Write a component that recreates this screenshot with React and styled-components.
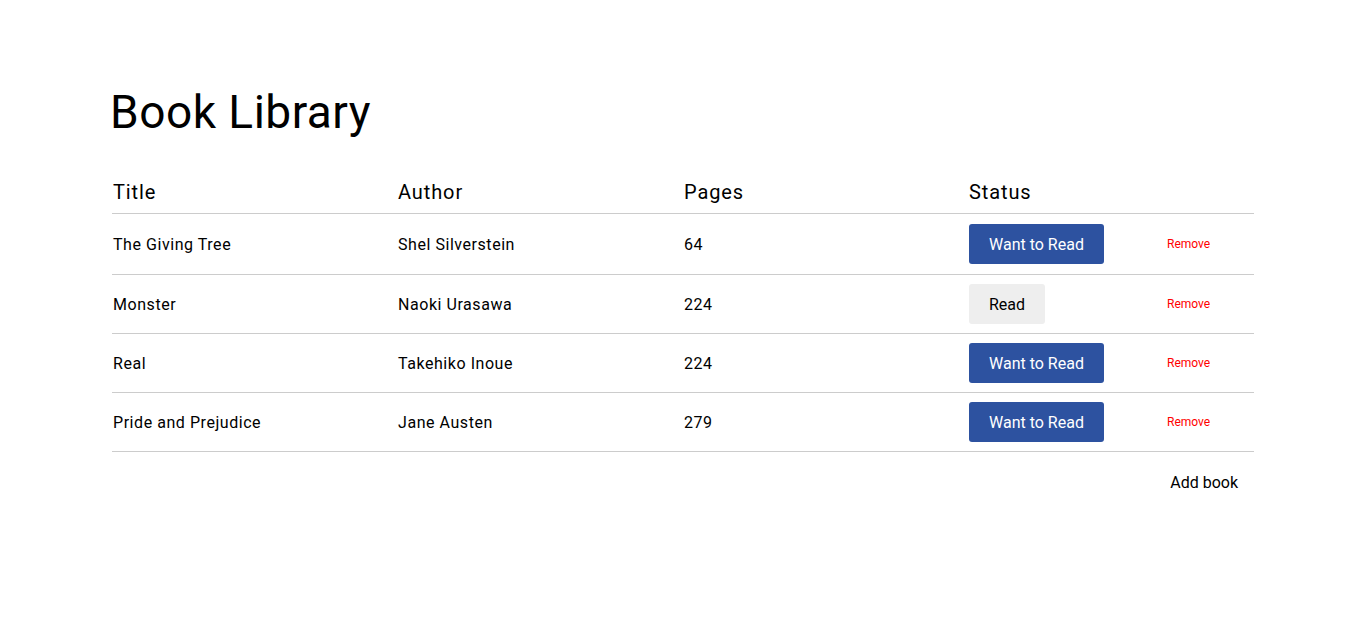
import styled, { createGlobalStyle } from "styled-components"

const GlobalStyle = createGlobalStyle`
    body {
        margin : 0;
        background : #fff;
        font-family : Roboto, "Liberation Sans", sans-serif;
        color : #000;
    }
`
const Page = styled.div`
    width : 1142px;
    padding : 85px 0 0 112px;
`
const Heading = styled.h1`
    font-size : 46px;
    font-weight : 400;
    margin : 0 0 32px -2px;
    letter-spacing : 0.5px;
`
const Row = styled.div`
    display : grid;
    grid-template-columns : 285px 286px 285px 198px 88px;
    align-items : center;
    height : ${props => props.$height || 59}px;
    border-bottom : 1px solid #ccc;
`
const HeadCell = styled.div`
    font-size : 20px;
    font-weight : 400;
    letter-spacing : 0.9px;
    padding-left : 1px;
`
const Cell = styled.div`
    font-size : 16px;
    letter-spacing : 0.55px;
    padding-left : 1px;
`
const StatusButton = styled.button`
    font-family : inherit;
    font-size : 16px;
    height : 40px;
    padding : 0 20px;
    border : none;
    border-radius : 3px;
    margin-left : 1px;
    background : ${props => props.$read ? "#eeeeee" : "#2d52a0"};
    color : ${props => props.$read ? "#000" : "#fff"};
    cursor : pointer;
`
const RemoveButton = styled.button`
    font-family : inherit;
    font-size : 12px;
    color : #ff0000;
    background : none;
    border : none;
    padding : 0 0 0 1px;
    justify-self : start;
    cursor : pointer;
`
const Footer = styled.div`
    display : flex;
    justify-content : flex-end;
    padding-top : 21px;
`
const AddButton = styled.button`
    font-family : inherit;
    font-size : 16px;
    background : none;
    border : none;
    padding : 0 16px;
    cursor : pointer;
`

const books = [
    { title : "The Giving Tree", author : "Shel Silverstein", pages : 64, read : false },
    { title : "Monster", author : "Naoki Urasawa", pages : 224, read : true },
    { title : "Real", author : "Takehiko Inoue", pages : 224, read : false },
    { title : "Pride and Prejudice", author : "Jane Austen", pages : 279, read : false },
]

const App = () => {
    return (
        <Page>
            <GlobalStyle />
            <Heading>Book Library</Heading>
            <Row $height={42}>
                <HeadCell>Title</HeadCell>
                <HeadCell>Author</HeadCell>
                <HeadCell>Pages</HeadCell>
                <HeadCell>Status</HeadCell>
                <div></div>
            </Row>
            {books.map((book, i) => (
                <Row key={book.title} $height={i === 0 ? 60 : 58}>
                    <Cell>{book.title}</Cell>
                    <Cell>{book.author}</Cell>
                    <Cell>{book.pages}</Cell>
                    <div>
                        <StatusButton $read={book.read}>
                            {book.read ? "Read" : "Want to Read"}
                        </StatusButton>
                    </div>
                    <RemoveButton>Remove</RemoveButton>
                </Row>
            ))}
            <Footer>
                <AddButton>Add book</AddButton>
            </Footer>
        </Page>
    )
}

export default App
